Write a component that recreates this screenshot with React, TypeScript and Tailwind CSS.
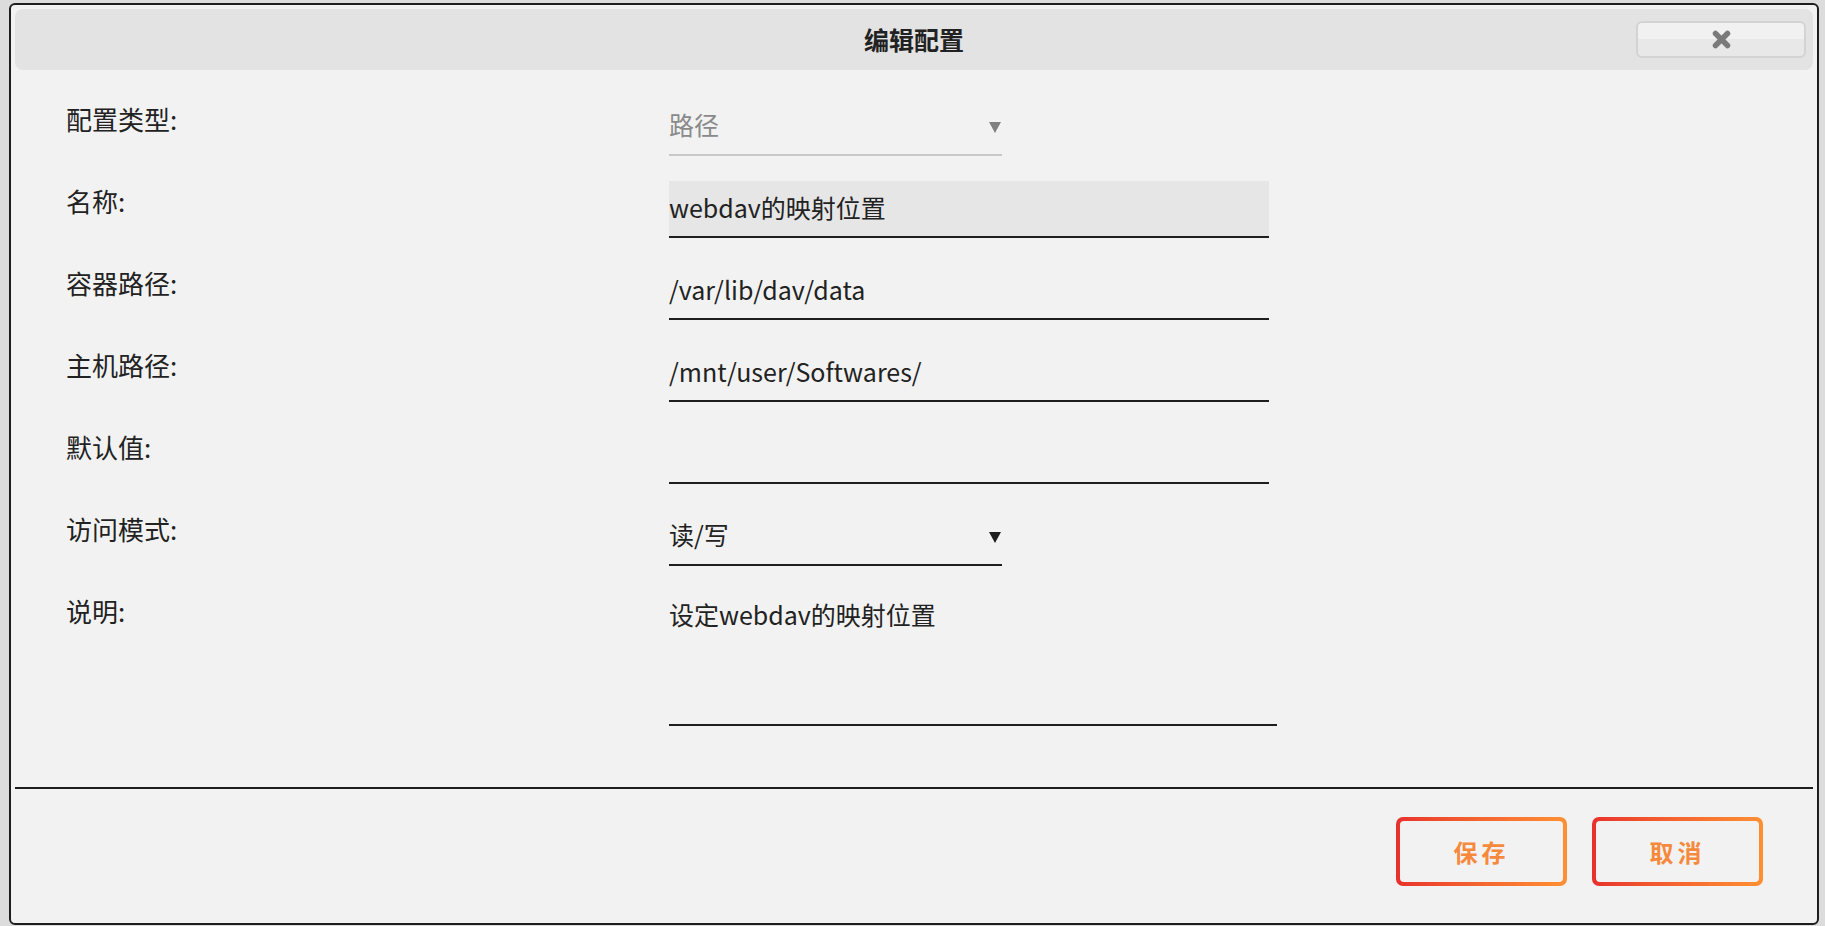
import React from 'react';

const Row = ({ label, children }: { label: string; children: React.ReactNode }) => (
  <div className="flex">
    <div className="w-[603px] shrink-0 text-[26px] leading-[39px] text-[#222]">{label}</div>
    {children}
  </div>
);

const Select = ({ value, disabled }: { value: string; disabled?: boolean }) => (
  <div
    className={`w-[333px] h-[57px] pb-[3px] flex items-center justify-between border-b-2 text-[25px] ${
      disabled ? 'border-[#c8c8c8] text-[#8a8a8a]' : 'border-[#1e1e1e] text-[#222]'
    }`}
  >
    <span>{value}</span>
    <svg width="12" height="12" viewBox="0 0 12 12" className="mr-[1px] mt-[3px]">
      <path d="M0 1h12L6 12z" fill={disabled ? '#808080' : '#1e1e1e'} />
    </svg>
  </div>
);

const TextField = ({ value, filled }: { value: string; filled?: boolean }) => (
  <input
    readOnly
    defaultValue={value}
    className={`w-[600px] h-[57px] pt-0 pb-[4px] px-0 border-b-2 border-[#1e1e1e] text-[25px] text-[#222] outline-none ${
      filled ? 'bg-[#e6e6e6]' : 'bg-transparent'
    }`}
  />
);

export default function App() {
  return (
    <div className="h-screen bg-[#dcdcdc] pl-[9px] pr-[6px] pt-[3px] font-['Noto_Sans_CJK_SC',sans-serif]">
      <div className="h-[922px] border-2 border-[#1e1e1e] rounded-[6px] bg-[#f2f2f2] flex flex-col px-[4px] pt-[4px]">
        {/* Header */}
        <div className="relative h-[61px] rounded-[8px] bg-[#e3e3e3] flex items-center justify-center">
          <h1 className="text-[25px] font-bold text-[#222]">编辑配置</h1>
          <button className="absolute right-[7px] top-[12px] w-[170px] h-[37px] rounded-[6px] border-2 border-[#d3d3d3] bg-linear-to-b from-[#f1f1f1] from-50% to-[#e8e8e8] to-50% flex items-center justify-center">
            <svg width="19" height="19" viewBox="0 0 19 19">
              <path d="M3.5 3.5L15.5 15.5M15.5 3.5L3.5 15.5" stroke="#7a7a7a" strokeWidth="5.5" strokeLinecap="round" />
            </svg>
          </button>
        </div>

        {/* Form */}
        <div className="mt-[29px] pl-[51px] flex flex-col gap-[25px]">
          <Row label="配置类型:">
            <Select value="路径" disabled />
          </Row>
          <Row label="名称:">
            <TextField value="webdav的映射位置" filled />
          </Row>
          <Row label="容器路径:">
            <TextField value="/var/lib/dav/data" />
          </Row>
          <Row label="主机路径:">
            <TextField value="/mnt/user/Softwares/" />
          </Row>
          <Row label="默认值:">
            <TextField value="" />
          </Row>
          <Row label="访问模式:">
            <Select value="读/写" />
          </Row>
          <Row label="说明:">
            <textarea
              readOnly
              defaultValue="设定webdav的映射位置"
              className="w-[608px] h-[135px] resize-none border-b-2 border-[#1e1e1e] bg-transparent text-[25px] leading-[36px] pt-[5px] text-[#222] outline-none"
            />
          </Row>
        </div>

        <div className="mt-[61px] h-[2px] bg-[#1e1e1e]" />

        {/* Footer */}
        <div className="pt-[28px] pr-[50px] flex justify-end gap-[25px]">
          {['保存', '取消'].map((t) => (
            <button
              key={t}
              className="w-[171px] h-[69px] rounded-[7px] p-[4px] bg-linear-to-r from-[#e8302c] to-[#ff8f33]"
            >
              <span className="w-full h-full rounded-[4px] bg-[#f2f2f2] flex items-center justify-center text-[24px] font-bold tracking-[4px] text-[#f6893b]">
                {t}
              </span>
            </button>
          ))}
        </div>
      </div>
    </div>
  );
}
